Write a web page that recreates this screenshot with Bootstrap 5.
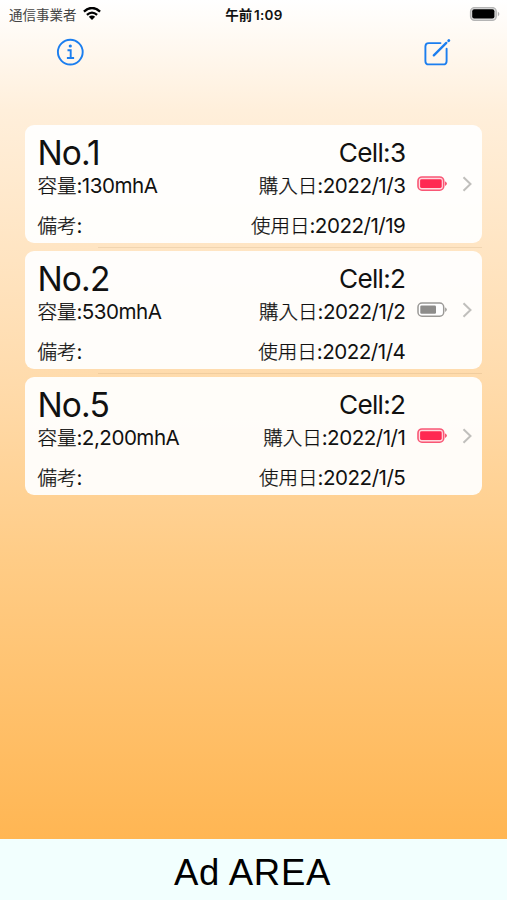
<!DOCTYPE html>
<html lang="ja">
<head>
<meta charset="utf-8">
<meta name="viewport" content="width=device-width, initial-scale=1">
<title>Battery list</title>
<link href="https://cdn.jsdelivr.net/npm/bootstrap@5.3.0/dist/css/bootstrap.min.css" rel="stylesheet">
<style>
body{font-family:Inter,"Noto Sans CJK JP",sans-serif;color:#111;height:900px;overflow:hidden;background:#fff}
.app-screen{height:839px;background:linear-gradient(#fff 0,#ffefdb 110px,#ffdcae 370px,#ffcc86 560px,#ffb653 839px)}
.status-bar{height:28px;font-size:13.5px;line-height:26px;padding:0 7px 0 9px}
.carrier{color:#444}
.clock{font-weight:600;letter-spacing:.3px;padding-right:1px}
.clock .ja{font-weight:700;margin-right:-2px}
.ja{font-family:"Noto Sans CJK JP",sans-serif;letter-spacing:0}
.wifi{margin-left:-2px}
.tool-bar{height:97.4px;padding:10px 56px 0 56px}
.cells{padding:0 24.6px 0 25.4px}
.battery-item{height:118px;border-radius:9px;background:rgba(255,255,255,.93);padding:0 9px 0 12px}
.separator{height:1px;margin:3.5px 0 3.5px 73px;background:rgba(150,110,60,.13)}
.texts{width:368px}
.r1{height:47px;padding-top:9px}
.r2{height:26px;line-height:26px}
.r3{height:26px;line-height:26px;margin-top:14px}
.name{font-size:33.5px;line-height:38px;letter-spacing:-.8px}
.count{font-size:26.2px;line-height:38px;letter-spacing:-.7px}
.detail{font-size:20.6px;letter-spacing:-.5px;white-space:nowrap}
.detail .ja{font-size:19.5px;font-weight:300;-webkit-text-stroke:.25px #111}
.ad-area{height:61px;background:#f2fffe;font-family:"Liberation Sans",Arial,sans-serif;font-size:36.5px;line-height:68px;letter-spacing:.7px;padding-right:2px;color:#000}
svg{display:block}
</style>
</head>
<body>
<main class="app-screen">
  <div class="status-bar d-flex justify-content-between align-items-center">
    <div class="d-flex align-items-center gap-2 col-4"><span class="carrier ja">通信事業者</span>
      <svg class="wifi" width="18" height="14" viewBox="0 0 18 14"><g fill="none" stroke="#000" stroke-width="2.3"><path d="M.9 4.6Q9-2.7 17.1 4.6"/><path d="M3.9 7.8Q9 3.4 14.1 7.8"/></g><path d="M5.8 9.8Q9 7.2 12.2 9.8L9 13Z"/></svg>
    </div>
    <div class="clock text-center col-4"><span class="ja">午前</span> 1:09</div>
    <div class="col-4 d-flex justify-content-end"><svg width="31" height="15" viewBox="0 0 31 15"><rect x="1.6" y=".6" width="25.6" height="12.8" rx="4" fill="#ddd" stroke="#b4b4b4" stroke-width="1.4"/><rect x="3.2" y="2.2" width="22.2" height="9.4" rx="2"/><path d="M28.8 4.6Q32 7 28.8 9.4Z" fill="#b0b0b0"/></svg></div>
  </div>
  <nav class="tool-bar d-flex justify-content-between align-items-start">
    <svg width="28" height="28" viewBox="0 0 28 28" fill="none" stroke="#1b7eef" stroke-width="1.9"><circle cx="14.3" cy="14.1" r="12.4"/><path d="M11.5 12.3h3.2v7.5M10.9 20h7.2"/><circle cx="14.3" cy="8" r="1.6" fill="#1b7eef" stroke="none"/></svg>
    <svg width="28" height="29" viewBox="0 0 28 29" fill="none" stroke="#1b7eef" stroke-width="1.9" stroke-linecap="round"><path d="M17.5 5.1H5.8Q2.4 5.1 2.4 8.5V22.9Q2.4 26.4 5.8 26.4H20.2Q23.6 26.4 23.6 22.9V10.7"/><path d="M10.8 17.4L23.3 4.9" stroke-width="2.3"/><path d="M25.6 2.8l.3-.3" stroke-width="2.7"/></svg>
  </nav>
  <section class="cells">
    <article class="battery-item d-flex">
      <div class="texts">
        <div class="r1 d-flex justify-content-between"><span class="name">No.1</span><span class="count">Cell:3</span></div>
        <div class="r2 detail d-flex justify-content-between"><span><span class="ja">容量</span>:130mhA</span><span><span class="ja">購入日</span>:2022/1/3</span></div>
        <div class="r3 detail d-flex justify-content-between"><span><span class="ja">備考</span>:</span><span><span class="ja">使用日</span>:2022/1/19</span></div>
      </div>
      <div class="flex-fill d-flex align-items-center justify-content-between ps-2 ms-1">
        <svg width="32" height="16" viewBox="0 0 32 16"><rect x="1" y="1" width="25.7" height="13.2" rx="4" fill="#ffd9df" stroke="#f95775" stroke-width="1.6"/><rect x="3.1" y="3.3" width="21.6" height="8.6" rx="1.4" fill="#ff2852"/><path d="M28 5.3Q32 7.6 28 9.9Z" fill="#f95775"/></svg>
        <svg width="11" height="16" viewBox="0 0 11 16" fill="none" stroke="#c0bfbc" stroke-width="2"><path d="M1.5 1.2L8.5 8L1.5 14.8"/></svg>
      </div>
    </article>
    <div class="separator"></div>
    <article class="battery-item d-flex">
      <div class="texts">
        <div class="r1 d-flex justify-content-between"><span class="name">No.2</span><span class="count">Cell:2</span></div>
        <div class="r2 detail d-flex justify-content-between"><span><span class="ja">容量</span>:530mhA</span><span><span class="ja">購入日</span>:2022/1/2</span></div>
        <div class="r3 detail d-flex justify-content-between"><span><span class="ja">備考</span>:</span><span><span class="ja">使用日</span>:2022/1/4</span></div>
      </div>
      <div class="flex-fill d-flex align-items-center justify-content-between ps-2 ms-1">
        <svg width="32" height="16" viewBox="0 0 32 16"><rect x="1" y="1" width="25.7" height="13.2" rx="4" fill="#fff" stroke="#9b9996" stroke-width="1.5"/><rect x="3.3" y="3.5" width="15.7" height="8.2" rx="1.2" fill="#8d8c8a"/><path d="M28 5.3Q32 7.6 28 9.9Z" fill="#aaa8a5"/></svg>
        <svg width="11" height="16" viewBox="0 0 11 16" fill="none" stroke="#c0bfbc" stroke-width="2"><path d="M1.5 1.2L8.5 8L1.5 14.8"/></svg>
      </div>
    </article>
    <div class="separator"></div>
    <article class="battery-item d-flex">
      <div class="texts">
        <div class="r1 d-flex justify-content-between"><span class="name">No.5</span><span class="count">Cell:2</span></div>
        <div class="r2 detail d-flex justify-content-between"><span><span class="ja">容量</span>:2,200mhA</span><span><span class="ja">購入日</span>:2022/1/1</span></div>
        <div class="r3 detail d-flex justify-content-between"><span><span class="ja">備考</span>:</span><span><span class="ja">使用日</span>:2022/1/5</span></div>
      </div>
      <div class="flex-fill d-flex align-items-center justify-content-between ps-2 ms-1">
        <svg width="32" height="16" viewBox="0 0 32 16"><rect x="1" y="1" width="25.7" height="13.2" rx="4" fill="#ffd9df" stroke="#f95775" stroke-width="1.6"/><rect x="3.1" y="3.3" width="21.6" height="8.6" rx="1.4" fill="#ff2852"/><path d="M28 5.3Q32 7.6 28 9.9Z" fill="#f95775"/></svg>
        <svg width="11" height="16" viewBox="0 0 11 16" fill="none" stroke="#c0bfbc" stroke-width="2"><path d="M1.5 1.2L8.5 8L1.5 14.8"/></svg>
      </div>
    </article>
  </section>
</main>
<footer class="ad-area text-center">Ad AREA</footer>
<script src="https://cdn.jsdelivr.net/npm/bootstrap@5.3.0/dist/js/bootstrap.bundle.min.js"></script>
</body>
</html>
